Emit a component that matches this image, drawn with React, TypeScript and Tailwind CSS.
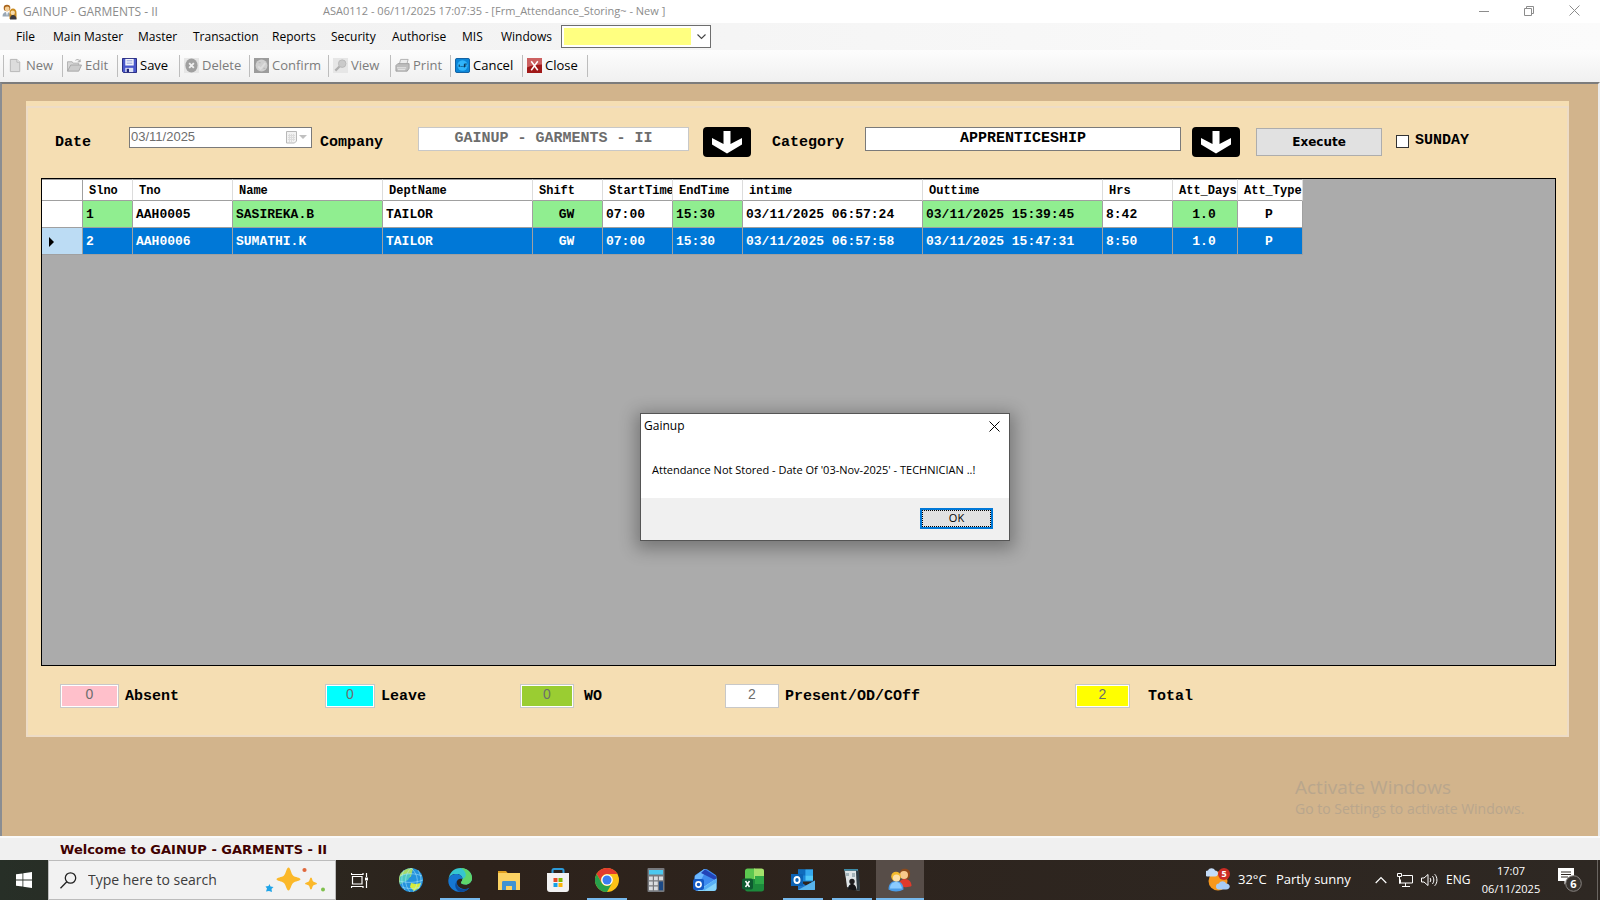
import type { ReactNode } from "react";

const ui = "font-['Open_Sans',sans-serif]";
const mono = "font-['Liberation_Mono',monospace]";

const menuItems = [
  { label: "File", width: "w-[37px]" },
  { label: "Main Master", width: "w-[85px]" },
  { label: "Master", width: "w-[55px]" },
  { label: "Transaction", width: "w-[79px]" },
  { label: "Reports", width: "w-[59px]" },
  { label: "Security", width: "w-[61px]" },
  { label: "Authorise", width: "w-[70px]" },
  { label: "MIS", width: "w-[39px]" },
  { label: "Windows", width: "w-[60px]" },
];

function PeopleIcon({ className }: { className: string }) {
  return (
    <svg viewBox="0 0 24 24" className={className} aria-hidden="true">
      <path d="M11 18c0-5 2-7 6-7s6.500 3 6.500 7c-2 1.500-9 1.500-12.500 0z" fill="#e03a2c" />
      <path d="M11.500 5.500C12 1.500 15 .5 17.500 .8c3.500.4 5 3 4.500 6.200-.3 2-1 3-2 4l-6-1z" fill="#8c4a1c" />
      <circle cx="16" cy="7" r="4" fill="#f8c88c" />
      <path d="M.5 21.500c0-5.500 3-8.500 7.500-8.500s7.500 3 7.500 8.500c-4 2.500-11 2.500-15 0z" fill="#4a9ce8" />
      <path d="M2 20.500c0-4.500 3-6.500 6-6.500s5 2 6 6.500z" fill="#8acbff" />
      <circle cx="8" cy="8.500" r="4.800" fill="#f2b92c" />
      <circle cx="8.500" cy="10" r="3.600" fill="#fde0a8" />
    </svg>
  );
}

function TitlePeopleIcon() {
  return (
    <svg viewBox="0 0 16 16" className="size-4" aria-hidden="true">
      <path d="M0.500 12.500c0-3 1.500-4.500 4-4.500s4 1.500 4 4.500z" fill="#9aa8b6" />
      <path d="M4 8l1 4 1-4z" fill="#fff" />
      <circle cx="5" cy="4" r="3.300" fill="#a8641c" />
      <circle cx="5.200" cy="5" r="2.400" fill="#f5cf96" />
      <path d="M7.500 15V9c0-3 1.500-4.500 3.500-4.500S14.500 6 14.500 9v6z" fill="#c98a1e" />
      <path d="M8 15.500c0-3 1-4.500 3-4.500s3.500 1.500 3.500 4.500z" fill="#3a3a42" />
      <circle cx="10.700" cy="8.800" r="2.200" fill="#f7dcae" />
    </svg>
  );
}

const toolbarItems: { label: string; width: string; enabled: boolean; icon: ReactNode }[] = [
  {
    label: "New",
    width: "w-[59px]",
    enabled: false,
    icon: (
      <>
        <path d="M2.500 1.500h7l3 3v10h-10z" fill="#dcdcdc" stroke="#b4b4b4" />
        <path d="M9.500 1.500v3h3" fill="#f4f4f4" stroke="#b4b4b4" />
      </>
    ),
  },
  {
    label: "Edit",
    width: "w-[55px]",
    enabled: false,
    icon: (
      <>
        <path d="M0.500 14V4h5l1 1.500h6V8" fill="#d6d6d6" stroke="#b0b0b0" />
        <path d="M0.500 14L4 7.500h11.500L12.500 14z" fill="#cccccc" stroke="#a8a8a8" />
        <path d="M9 2.500c2-1.500 4-1 5 1.500m0-2.500V4h-2.500" fill="none" stroke="#a8a8a8" />
      </>
    ),
  },
  {
    label: "Save",
    width: "w-[62px]",
    enabled: true,
    icon: (
      <>
        <path d="M.5.5h15v15h-14l-1-1z" fill="#4a58cc" stroke="#20247c" />
        <path d="M3.500 1h9v7h-9z" fill="#f2f4fb" />
        <path d="M5 3h6M5 5.500h6" stroke="#8c9ada" />
        <path d="M3.500 10.500H12V15H3.500z" fill="#dde2f4" />
        <path d="M5 11.500h2.500V15H5z" fill="#20247c" />
      </>
    ),
  },
  {
    label: "Delete",
    width: "w-[70px]",
    enabled: false,
    icon: (
      <>
        <path d="M0 0h16v16H0z" fill="#e6e6e6" />
        <ellipse cx="8" cy="8" rx="6.500" ry="7.500" fill="#a0a0a0" />
        <path d="M5.500 5.500l5 5m0-5l-5 5" stroke="#f0f0f0" strokeWidth="2" />
      </>
    ),
  },
  {
    label: "Confirm",
    width: "w-[79px]",
    enabled: false,
    icon: (
      <>
        <path d="M0 0h16v16H0z" fill="#9c9c9c" />
        <circle cx="8" cy="8" r="6.300" fill="#cfcfcf" />
        <path d="M4.500 9l2.500 2.500 5-6" fill="none" stroke="#dedede" strokeWidth="2" />
        <path d="M5 5h2m3 6h2" stroke="#b4b4b4" />
      </>
    ),
  },
  {
    label: "View",
    width: "w-[62px]",
    enabled: false,
    icon: (
      <>
        <path d="M0 0h16v16H0z" fill="#e6e6e6" />
        <path d="M7.500 8.500L2.500 13.500" stroke="#b0b0b0" strokeWidth="2.400" />
        <circle cx="9.800" cy="6" r="4" fill="#cacaca" stroke="#b8b8b8" />
      </>
    ),
  },
  {
    label: "Print",
    width: "w-[60px]",
    enabled: false,
    icon: (
      <>
        <path d="M4.500 7l1.500-5.500h8L12.500 7z" fill="#ececec" stroke="#b0b0b0" />
        <path d="M1 8l2-2h12v5l-2 3H1z" fill="#bdbdbd" stroke="#a0a0a0" />
        <path d="M2 10.500h10M3 12.500h8" stroke="#efefef" />
      </>
    ),
  },
  {
    label: "Cancel",
    width: "w-[72px]",
    enabled: true,
    icon: (
      <>
        <rect x="0.500" y="0.500" width="15" height="15" rx="1.500" fill="#0c86d8" stroke="#0a5a9c" />
        <circle cx="8" cy="8" r="5.500" fill="#30b4fa" />
        <path d="M4.500 7v2.500m2-1v1m2-1v1m1.500.5V6.500h2.500m-2.500 2h2" stroke="#062a4c" fill="none" />
      </>
    ),
  },
  {
    label: "Close",
    width: "w-[65px]",
    enabled: true,
    icon: (
      <>
        <path d="M0 0h16v16H0z" fill="#a01818" />
        <path d="M0 0h16v7c-5 0-11 1-16 3z" fill="#cc6060" />
        <path d="M4.500 3.500l7 9.500m0-9.500l-7 9.500" stroke="#fff" strokeWidth="1.600" />
      </>
    ),
  },
];

const columns = [
  { name: "Slno", width: "w-[50px]", green: true, center: false },
  { name: "Tno", width: "w-[100px]", green: false, center: false },
  { name: "Name", width: "w-[150px]", green: true, center: false },
  { name: "DeptName", width: "w-[150px]", green: false, center: false },
  { name: "Shift", width: "w-[70px]", green: true, center: true },
  { name: "StartTime", width: "w-[70px]", green: false, center: false },
  { name: "EndTime", width: "w-[70px]", green: true, center: false },
  { name: "intime", width: "w-[180px]", green: false, center: false },
  { name: "Outtime", width: "w-[180px]", green: true, center: false },
  { name: "Hrs", width: "w-[70px]", green: false, center: false },
  { name: "Att_Days", width: "w-[65px]", green: true, center: true },
  { name: "Att_Type", width: "w-[65px]", green: false, center: true },
];

const rows = [
  ["1", "AAH0005", "SASIREKA.B", "TAILOR", "GW", "07:00", "15:30", "03/11/2025 06:57:24", "03/11/2025 15:39:45", "8:42", "1.0", "P"],
  ["2", "AAH0006", "SUMATHI.K", "TAILOR", "GW", "07:00", "15:30", "03/11/2025 06:57:58", "03/11/2025 15:47:31", "8:50", "1.0", "P"],
];

const counters = [
  { id: "absent", label: "Absent", value: "0", slot: "w-[265px]", box: "w-[59px]", fill: "bg-[#ffc0cb]", gap: "gap-1.5" },
  { id: "leave", label: "Leave", value: "0", slot: "w-[195px]", box: "w-[50px]", fill: "bg-[#00ffff]", gap: "gap-1.5" },
  { id: "wo", label: "WO", value: "0", slot: "w-[205px]", box: "w-[54px]", fill: "bg-[#9acd32]", gap: "gap-2.5" },
  { id: "present", label: "Present/OD/COff", value: "2", slot: "w-[350px]", box: "w-[54px]", fill: "bg-white", gap: "gap-1.5" },
  { id: "total", label: "Total", value: "2", slot: "w-[160px]", box: "w-[55px]", fill: "bg-[#ffff00]", gap: "gap-[18px]" },
];

function ArrowButton({ label }: { label: string }) {
  return (
    <button type="button" aria-label={label} className="flex h-[30px] w-12 items-center justify-center rounded bg-black">
      <svg viewBox="0 0 32 24" className="h-6 w-8" aria-hidden="true">
        <path d="M12.500 1h7v13l11.500-6v6.500L16 23.500 1 14.500V8l11.500 6z" fill="#fff" />
      </svg>
    </button>
  );
}

const apps: { name: string; running: boolean; icon: ReactNode }[] = [
  {
    name: "Browser",
    running: false,
    icon: (
      <>
        <circle cx="12" cy="12" r="12" fill="#2492dc" />
        <path d="M2 5c4-4 8-5.500 12-4.500l-2 8-5 3-6 5C-.5 13-.3 8 2 5z" fill="#a6dc6c" />
        <path d="M1 9c4-4 8-4 11-3l-3 6-8 4z" fill="#4cc8c0" />
        <path d="M12 15l5 1 5-1-2 5-5 3-4-4z" fill="#d8ec3c" />
        <path d="M1 8c7-3 15-3 22 0M0 13c8 2 16 2 24-1M3 19c6 2 12 2 18 0M12 0C5 7 5 17 11 24M12 0c8 7 8 16 2 24M5 2c-3 6-3 14 1 20M19 2c4 7 4 14 0 19" fill="none" stroke="#b4ecff" strokeWidth=".5" />
      </>
    ),
  },
  {
    name: "Microsoft Edge",
    running: true,
    icon: (
      <>
        <path d="M0.500 11C1.500 4.500 6 0 12.500 0 19 0 24 4.500 24 10c0 4-3 6.500-6.500 6.500-3 0-4.500-1-4.500-2 0-.8 1.500-1.500 1.500-3.500 0-3-3-5-6-5C4 6 1.500 8 .5 11z" fill="#36c6d0" />
        <path d="M13 0c6.500.2 11 4.700 11 10 0 4-3 6.500-6.500 6.500-3 0-4.500-1-4.500-2 0-.8 1.500-1.500 1.500-3.500C20 9 18 3 13 0z" fill="#5fd66b" />
        <path d="M.3 13C.3 8.500 4 6 8.500 6c3.500 0 6 2.200 6 5-4-1-6.500 1.500-5.500 5 1 3.500 4.500 5 8 5 2 0 3-.5 4.500-1.300C19.500 22.500 16 24 12.500 24 5.500 24 .3 19 .3 13z" fill="#1677d2" />
        <path d="M9.500 12c-2 4 0 8 4.500 9 3 .6 5.500-.3 7.500-1.300-2 2.800-5.500 4.300-9 4.300-4.500-1-7.500-7-3-12z" fill="#0b4a9a" />
      </>
    ),
  },
  {
    name: "File Explorer",
    running: false,
    icon: (
      <>
        <path d="M1 3h8l2 2.500H1z" fill="#e0a020" />
        <path d="M1 5h22v17H1z" fill="#fbd263" />
        <path d="M5 22v-7.500c0-1 .5-1.500 1.500-1.500h11c1 0 1.500.5 1.500 1.500V22h-4v-4H9v4z" fill="#3f92d2" />
      </>
    ),
  },
  {
    name: "Microsoft Store",
    running: false,
    icon: (
      <>
        <path d="M6.500 6V2.500c0-1 .5-1.500 1.500-1.500h8c1 0 1.500.5 1.500 1.500V6" fill="none" stroke="#2c9ad8" strokeWidth="2" />
        <path d="M1 5h22v16c0 2-1 3-3 3H4c-2 0-3-1-3-3z" fill="#f2f2f2" />
        <path d="M7.500 10h4v4h-4z" fill="#e64a26" />
        <path d="M12.500 10h4v4h-4z" fill="#7fb900" />
        <path d="M7.500 15h4v4h-4z" fill="#14a0e6" />
        <path d="M12.500 15h4v4h-4z" fill="#fbb40a" />
      </>
    ),
  },
  {
    name: "Google Chrome",
    running: true,
    icon: (
      <>
        <circle cx="12" cy="12" r="12" fill="#fbc116" />
        <path d="M1.600 6A12 12 0 0 1 22.400 6H12a6 6 0 0 0-5.200 9z" fill="#e33b2e" />
        <path d="M1.600 6A12 12 0 0 0 12 24l5.200-9a6 6 0 0 1-10.400 0z" fill="#27a04b" />
        <circle cx="12" cy="12" r="5.800" fill="#fff" />
        <circle cx="12" cy="12" r="4.500" fill="#3b7df0" />
      </>
    ),
  },
  {
    name: "Calculator",
    running: false,
    icon: (
      <>
        <rect x="3.500" y="0" width="17" height="24" rx="1" fill="#77797d" />
        <path d="M5 2h14v4.500H5z" fill="#4cc8ee" />
        <path d="M5 8.500h3.800v3.800H5zM10 8.500h3.800v3.800H10zM15 8.500h4v3.800h-4zM5 13.500h3.800v3.800H5zM10 13.500h3.800v3.800H10zM5 18.500h3.800v3.800H5zM10 18.500h3.800v3.800H10z" fill="#dadde0" />
        <path d="M15 13.500h4v8.800h-4z" fill="#1c4a86" />
      </>
    ),
  },
  {
    name: "Outlook",
    running: false,
    icon: (
      <>
        <path d="M1.500 9c0-1.200.5-2 1.500-2.600L10.500 1.600c1.200-.8 2.800-.8 4 0L22 6.400c1 .6 1.500 1.400 1.500 2.600v11c0 2-1 3-3 3H4.500c-2 0-3-1-3-3z" fill="#3f8cf0" />
        <path d="M2 8l8.500-6.400c1-.7 2-.6 3 0L8 12l-6.500 2z" fill="#6cb8ff" />
        <path d="M8 5l4-3.800 11 7.300v4z" fill="#2344b8" />
        <path d="M5 22.500l18.500-12V20c0 2-1 3-3 3H5z" fill="#86d4fa" />
        <path d="M10 20l13.500-9.500v4L11 22.500z" fill="#58b0f6" />
        <rect x="0" y="11" width="11" height="11" rx="2" fill="#1459c4" />
        <circle cx="5.500" cy="16.500" r="2.600" fill="none" stroke="#fff" strokeWidth="1.600" />
      </>
    ),
  },
  {
    name: "Excel",
    running: false,
    icon: (
      <>
        <path d="M3 3c0-1.500 1-2.500 2.500-2.500H13V12H3z" fill="#5cc850" />
        <path d="M12 .5h7.500C21 .5 22 1.500 22 3v8H12z" fill="#a4e26c" />
        <path d="M3 11h19v10c0 1.500-1 2.500-2.500 2.500h-14C4 23.500 3 22.500 3 21z" fill="#1c8a3c" />
        <path d="M13 8h9v8h-9z" fill="#2fa847" />
        <rect x="0" y="10.500" width="11" height="11" rx="2" fill="#0e5a30" />
        <path d="M3.500 13l4 6m0-6l-4 6" stroke="#fff" strokeWidth="1.500" />
      </>
    ),
  },
  {
    name: "Outlook Classic",
    running: true,
    icon: (
      <>
        <path d="M7 1.500h15v12H7z" fill="#1a86d8" />
        <path d="M7 1.500h7.500v6H7z" fill="#0f6cbd" />
        <path d="M14.500 1.500H22v6h-7.500z" fill="#34a8ee" />
        <path d="M14.500 7.500H22v5h-7.500z" fill="#50c8f8" />
        <path d="M7 12.500l8 5 9-5V22H7z" fill="#1c74c8" />
        <path d="M7 22l17-9.500V21c0 .6-.4 1-1 1z" fill="#58b4ec" />
        <path d="M0 6h12v12H0z" fill="#0c62b4" />
        <ellipse cx="6" cy="12" rx="2.600" ry="3" fill="none" stroke="#fff" strokeWidth="1.800" />
      </>
    ),
  },
  {
    name: "Visitor Log",
    running: true,
    icon: (
      <>
        <path d="M4 1h14l2 22-12-2z" fill="#6c7a80" />
        <path d="M5 3h11l1 14 1 4-11-2z" fill="#dfe4e6" />
        <path d="M16 2l3 2 1 19-3-1z" fill="#2c3a42" />
        <path d="M4 1h14v1.500H4z" fill="#3c8ca8" />
        <path d="M6 5h3v3H6zM12 5h3v4h-3z" fill="#a4b4ba" />
        <circle cx="12" cy="13.500" r="2.700" fill="#1c1c1e" />
        <path d="M8 21.500c0-4 2-5.500 4-5.500s4.500 1.500 4.500 6.500z" fill="#141416" />
      </>
    ),
  },
];

function Field({ id, value, className }: { id: string; value: string; className: string }) {
  return (
    <input
      id={id}
      type="text"
      readOnly
      defaultValue={value}
      className={`h-6 self-start border bg-white pb-0.5 text-center text-[15px] leading-none outline-none ${className}`}
    />
  );
}

function WindowHeader() {
  return (
    <header className="bg-white text-xs text-black">
      <div className="flex h-[23px] items-center pl-[2px] pr-5 text-[#8c8c8c]">
        <TitlePeopleIcon />
        <h1 className="ml-[5px] w-[300px] whitespace-pre">GAINUP - GARMENTS - II</h1>
        <p className="flex-1 whitespace-nowrap text-[11px]">ASA0112 - 06/11/2025 17:07:35 - [Frm_Attendance_Storing~ - New ]</p>
        <div className="-mt-[2px] flex gap-[35px]">
          <button type="button" aria-label="Minimize">
            <svg viewBox="0 0 10 10" className="size-2.5" aria-hidden="true"><path d="M0 5.500h10" stroke="#8c8c8c" /></svg>
          </button>
          <button type="button" aria-label="Restore">
            <svg viewBox="0 0 10 10" className="size-2.5" fill="none" stroke="#8c8c8c" aria-hidden="true">
              <path d="M.5 2.500h7v7h-7zM2.500 2.500v-2h7v7h-2" />
            </svg>
          </button>
          <button type="button" aria-label="Close window">
            <svg viewBox="0 0 11 11" className="size-[11px]" aria-hidden="true"><path d="M.5.5l10 10m0-10l-10 10" stroke="#8c8c8c" /></svg>
          </button>
        </div>
      </div>

      <nav className="flex h-[27px] items-center bg-linear-to-r from-[#f0f0f0] to-[#fbfbfb] pl-4" aria-label="Main menu">
        {menuItems.map((m) => (
          <button key={m.label} type="button" className={`${m.width} shrink-0 whitespace-nowrap text-left`}>
            {m.label}
          </button>
        ))}
        <div className="flex h-[23px] w-[150px] items-center border border-[#6e6e6e] bg-white p-0.5">
          <select aria-label="Quick search" className="h-full flex-1 appearance-none bg-[#ffff80] outline-none">
            <option></option>
          </select>
          <svg viewBox="0 0 9 6" className="ml-1.5 mr-0.5 h-1.5 w-[9px]" aria-hidden="true">
            <path d="M.5.5l4 4 4-4" fill="none" stroke="#444" strokeWidth="1.100" />
          </svg>
        </div>
      </nav>

      <div className="flex h-8 items-center bg-linear-to-b from-[#fdfdfd] to-[#f0f0f0] pl-[3px] text-[13px]" role="toolbar" aria-label="Actions">
        {toolbarItems.map((t) => (
          <div key={t.label} className={`${t.width} flex h-[22px] shrink-0 items-center border-l border-[#bdbdbd] pl-1`}>
            <button
              type="button"
              disabled={!t.enabled}
              className={`flex items-center gap-[3px] ${t.enabled ? "text-black" : "text-[#7c7c7c]"}`}
            >
              <svg viewBox="0 0 16 16" className="size-[15px] shrink-0" fill="none" aria-hidden="true">{t.icon}</svg>
              {t.label}
            </button>
          </div>
        ))}
        <div className="h-[22px] border-l border-[#bdbdbd]" />
      </div>
    </header>
  );
}

function AttendanceForm() {
  return (
    <form className={`mr-[29px] ml-6 mt-[17px] flex flex-1 flex-col bg-[#f5deb3] pt-[5px] text-black ${mono}`} onSubmit={(e) => e.preventDefault()}>
      <div className="flex flex-1 flex-col border-2 border-[#eddcc6] pb-[27px] pl-[13px] pr-[11px] pt-[19px]">
        <div className="flex h-[30px] items-center pl-3.5 text-[15px] font-bold">
          <label htmlFor="date" className="w-[74px] pt-0.5">Date</label>
          <div className="flex h-[21px] w-[183px] items-center self-start border border-[#7a7a7a] bg-white pr-1">
            <input id="date" type="text" readOnly defaultValue="03/11/2025" className="min-w-0 flex-1 pb-0.5 pl-px font-['Liberation_Sans',sans-serif] text-[13px] font-normal text-[#6d6d6d] outline-none" />
            <svg viewBox="0 0 21 13" className="h-[13px] w-[21px]" aria-hidden="true">
              <path d="M.5.5h10v9.500l-2 2h-8z" fill="#f2f2f2" stroke="#b8b8b8" />
              <path d="M2 4.500h7m-7 2h7m-7 2h7M3.500 3v8m2-8v8m2-8v7" stroke="#dcdcdc" />
              <path d="M13 4h8l-4 4z" fill="#c0c0c0" />
            </svg>
          </div>
          <label htmlFor="company" className="ml-2 w-[98px] pt-0.5">Company</label>
          <Field id="company" value="GAINUP - GARMENTS - II" className="w-[271px] border-[#c8c8c8] text-[#6d6d6d]" />
          <div className="ml-3.5"><ArrowButton label="Choose company" /></div>
          <label htmlFor="category" className="ml-[21px] w-[93px] pt-0.5">Category</label>
          <Field id="category" value="APPRENTICESHIP" className="w-[316px] border-[#7a7a7a] text-black" />
          <div className="ml-[11px]"><ArrowButton label="Choose category" /></div>
          <button type="button" className="ml-4 h-7 w-[126px] border border-[#adadad] bg-[#e1e1e1] font-['DejaVu_Sans',sans-serif] text-xs font-bold">
            Execute
          </button>
          <label className="ml-3.5 flex items-center gap-1.5 pb-px">
            <input type="checkbox" className="size-[13px] appearance-none border border-[#333] bg-white" />
            SUNDAY
          </label>
        </div>

        <div className="mt-[21px] flex-1 overflow-hidden border border-black bg-[#ababab]">
          <table className="w-[1261px] table-fixed border-separate border-spacing-0 whitespace-nowrap text-left">
            <thead className="text-xs font-bold">
              <tr className="h-[22px]">
                <th className="w-[41px] border-b border-r border-t border-[#a0a0a0] bg-white" aria-label="Row marker" />
                {columns.map((c) => (
                  <th key={c.name} scope="col" className={`${c.width} overflow-hidden border-b border-r border-t border-b-[#a0a0a0] border-r-[#dcdcdc] border-t-[#a0a0a0] bg-white pb-0 pl-1.5 pt-0.5 leading-4`}>
                    {c.name}
                  </th>
                ))}
              </tr>
            </thead>
            <tbody className="text-[13px] font-bold">
              {rows.map((row, r) => {
                const selected = r === 1;
                return (
                  <tr key={row[1]} className="h-[27px]" aria-selected={selected}>
                    <td className={`border-b border-r border-[#a0a0a0] pb-0 pt-0.5 ${selected ? "bg-[#bcdcf4]" : "bg-white"}`}>
                      {selected && (
                        <svg viewBox="0 0 5 10" className="ml-[7px] h-2.5 w-[5px]" aria-hidden="true"><path d="M0 0l5 5-5 5z" /></svg>
                      )}
                    </td>
                    {columns.map((c, i) => (
                      <td
                        key={c.name}
                        className={`overflow-hidden border-b border-r border-[#a0a0a0] pb-0 pt-0.5 ${c.center ? "pr-0.5 text-center" : "pl-[3px]"} ${
                          selected ? "bg-[#0078d7] text-white" : c.green ? "bg-[#90ee90]" : "bg-white"
                        }`}
                      >
                        {row[i]}
                      </td>
                    ))}
                  </tr>
                );
              })}
            </tbody>
          </table>
        </div>

        <div className="mt-[18px] flex h-6 items-center pl-[19px] text-[15px] font-bold">
          {counters.map((c) => (
            <div key={c.id} className={`flex shrink-0 items-center ${c.slot} ${c.gap}`}>
              <div className={`${c.box} h-6 border border-[#c8c8c8] bg-white p-px`}>
                <input
                  id={c.id}
                  type="text"
                  readOnly
                  defaultValue={c.value}
                  className={`block h-5 w-full pb-1 text-center font-['Liberation_Sans',sans-serif] text-sm font-normal leading-none text-[#6d6d6d] outline-none ${c.fill}`}
                />
              </div>
              <label htmlFor={c.id} className="pt-0.5">{c.label}</label>
            </div>
          ))}
        </div>
      </div>
    </form>
  );
}

function MessageDialog() {
  return (
    <div role="dialog" aria-labelledby="dialog-title" className="absolute left-[640px] top-[413px] flex h-[128px] w-[370px] flex-col border border-[#555] bg-white text-black shadow-[0_4px_16px_4px_rgba(0,0,0,0.3)]">
      <div className="flex h-6 items-center justify-between pl-[3px] pr-[9px]">
        <h2 id="dialog-title" className="text-xs">Gainup</h2>
        <button type="button" aria-label="Close dialog">
          <svg viewBox="0 0 11 11" className="size-[11px]" aria-hidden="true"><path d="M.5.5l10 10m0-10l-10 10" stroke="#000" /></svg>
        </button>
      </div>
      <p className="flex flex-1 items-center whitespace-nowrap pl-[11px] pt-1 text-[11px]">
        Attendance Not Stored - Date Of '03-Nov-2025' - TECHNICIAN ..!
      </p>
      <div className="flex h-[42px] items-center justify-end bg-[#f0f0f0] pb-0.5 pr-4 text-[11px]">
        <button type="button" className="flex h-[21px] w-[73px] border-2 border-[#0078d7] bg-[#e1e1e1]">
          <span className="flex h-full w-full items-center justify-center border border-dotted border-black">OK</span>
        </button>
      </div>
    </div>
  );
}

function Taskbar() {
  return (
    <footer className="flex h-10 shrink-0 items-stretch bg-linear-to-r from-[#272f27] via-[#2d221b] via-30% to-[#2e2823] text-white">
      <button type="button" aria-label="Start" className="flex w-12 items-center justify-center">
        <svg viewBox="0 0 16 16" className="size-4" aria-hidden="true">
          <path d="M0 2.300l6.500-.9v6.200H0zM7.300 1.300L16 0v7.600H7.300zM0 8.400h6.500v6.200L0 13.700zM7.300 8.400H16V16l-8.700-1.200z" fill="#fff" />
        </svg>
      </button>
      <div className="flex w-[288px] items-center border border-[#bcbcbc] bg-[#f2f2f2] pl-[11px]">
        <svg viewBox="0 0 17 17" className="size-[17px]" fill="none" stroke="#222" strokeWidth="1.300" aria-hidden="true">
          <circle cx="10.500" cy="6" r="5.200" />
          <path d="M6.800 9.800L.5 16.300" />
        </svg>
        <input type="text" aria-label="Search" placeholder="Type here to search" className="ml-[11px] min-w-0 flex-1 text-sm outline-none placeholder:text-[#3c3c3c]" />
        <svg viewBox="0 0 60 26" className="mr-2.5 h-[26px] w-[60px] shrink-0" aria-hidden="true">
          <path d="M23.500 .5c2 0 2.500 6 4.500 8s7.500 2 7.500 3.800-5.500 1.800-7.500 3.800-2.500 7.400-4.500 7.400-2.500-5.400-4.500-7.400-7.500-2-7.500-3.800 5.500-1.800 7.500-3.800 2.500-8 4.500-8z" fill="#fbb829" />
          <path d="M46 10.500c1.200 0 1.200 3 2.200 4s3.800 1 3.800 2.100-2.800 1-3.800 2-1 3.900-2.200 3.900-1.200-2.900-2.200-3.900-3.800-.9-3.800-2 2.800-1.100 3.800-2.100 1-4 2.200-4z" fill="#fbb829" />
          <path d="M4.500 17l1 2.500 3 .5-2 2 .5 3-3-1-3 .5 1-3-1.500-2 3-.5z" fill="#1fa4e8" />
          <circle cx="39.500" cy="3" r="2.100" fill="#e0683c" />
          <circle cx="58" cy="22.500" r="2" fill="#7fc04c" />
        </svg>
      </div>
      <button type="button" aria-label="Task view" className="flex w-[50px] items-center justify-center pr-[3px]">
        <svg viewBox="0 0 17 17" className="size-[17px]" fill="none" stroke="#fff" aria-hidden="true">
          <path d="M1.500 4.500h9.500v7.500H1.500zM.5 1v1.500h11.500V1M.5 16v-1.500h11.500V16M15.500 1v4m0 4v7" strokeWidth="1.200" />
          <path d="M14 5.500h3v3h-3z" fill="#fff" stroke="none" />
        </svg>
      </button>
      {apps.map((a) => (
        <button key={a.name} type="button" aria-label={a.name} className="flex w-[49px] flex-col items-center">
          <span className="flex flex-1 items-center pt-0.5">
            <svg viewBox="0 0 24 24" className="size-6" fill="none" aria-hidden="true">{a.icon}</svg>
          </span>
          <span className={`h-0.5 w-10 ${a.running ? "bg-[#76b9ed]" : ""}`} />
        </button>
      ))}
      <button type="button" aria-label="Gainup" className="flex w-12 flex-col items-center bg-[#574d48]">
        <span className="flex flex-1 items-center pt-0.5"><PeopleIcon className="size-6" /></span>
        <span className="h-0.5 w-full bg-[#76b9ed]" />
      </button>

      <div className="ml-auto flex items-center">
        <button type="button" className="flex items-center whitespace-nowrap text-[13px]">
          <svg viewBox="0 0 25 24" className="mr-[7px] h-6 w-[25px]" aria-hidden="true">
            <circle cx="12" cy="13" r="9.500" fill="#f8981c" />
            <path d="M2 8.500a3 3 0 0 1 0-6c1-3 6-3 7 0 4 0 4 6 0 6z" fill="#c4dcf8" />
            <path d="M13 21.500a3 3 0 0 1 0-6c1-3 6-3 7 0 5 0 5 6 0 6z" fill="#a8ccf4" />
            <circle cx="18" cy="6" r="6" fill="#cc2c24" />
            <text x="18" y="9" fontSize="9" fontWeight="bold" textAnchor="middle" fill="#fff">5</text>
          </svg>
          <span className="w-[38px] text-left">32°C</span>
          <span className="w-[99px] text-left">Partly sunny</span>
        </button>
        <button type="button" aria-label="Show hidden icons" className="w-[22px]">
          <svg viewBox="0 0 12 8" className="h-2 w-3" aria-hidden="true"><path d="M.7 7L6 1.500 11.300 7" fill="none" stroke="#fff" strokeWidth="1.200" /></svg>
        </button>
        <button type="button" aria-label="Network" className="w-6">
          <svg viewBox="0 0 16 14" className="h-3.5 w-4" fill="none" stroke="#fff" aria-hidden="true">
            <path d="M5.500 2.500h10v7.500h-12V6.500M8.500 10v3M5 13.500h8M.5.500h4v3h-4zM2.500 3.500v7h1" />
          </svg>
        </button>
        <button type="button" aria-label="Volume" className="w-[25px]">
          <svg viewBox="0 0 17 14" className="h-3.5 w-[17px]" fill="none" stroke="#fff" aria-hidden="true">
            <path d="M.5 5h2.500l4-3.500v11L3 9H.5zM9 5c1 1 1 3 0 4M11.300 3c2 2 2 6 0 8M13.700 1.200c3 3 3 8.600 0 11.600" />
          </svg>
        </button>
        <button type="button" className="w-[35px] text-left text-xs">ENG</button>
        <button type="button" className="flex w-[60px] flex-col items-center text-[11px] leading-[18px]">
          <span>17:07</span>
          <span>06/11/2025</span>
        </button>
        <button type="button" aria-label="6 notifications" className="ml-[17px] mr-[15px] h-6 w-6">
          <svg viewBox="0 0 24 24" className="size-6" aria-hidden="true">
            <path d="M0 0h16v13H10l-3.500 3.500V13H0z" fill="#fff" />
            <path d="M3 4h10M3 6.500h10M3 9h7" stroke="#2e2823" />
            <circle cx="15.500" cy="15.500" r="7.800" fill="#38332f" stroke="#8a8683" />
            <text x="15.500" y="19.500" fontSize="11" fontWeight="bold" textAnchor="middle" fill="#fff">6</text>
          </svg>
        </button>
        <div className="h-10 w-[3px] border-l border-[#6a6561]" />
      </div>
    </footer>
  );
}

export default function App() {
  return (
    <div className={`relative flex min-h-screen flex-col overflow-hidden bg-[#f0f0f0] ${ui}`}>
      <WindowHeader />
      <main className="relative flex flex-1 flex-col border-2 border-b-0 border-l-[#8a8d92] border-r-[#ececec] border-t-[#7c7c7c] bg-[#d2b48c] pb-[99px]">
        <AttendanceForm />
        <div className="absolute bottom-[17px] left-[1293px] text-[#b9a68c]">
          <p className="text-[19px] leading-6">Activate Windows</p>
          <p className="text-sm leading-5">Go to Settings to activate Windows.</p>
        </div>
      </main>
      <div className="h-6 border-t-2 border-[#fafafa] pl-[60px] pt-px font-['DejaVu_Sans',sans-serif] text-[13px] font-bold leading-[21px] text-[#400000]">
        Welcome to GAINUP - GARMENTS - II
      </div>
      <Taskbar />
      <MessageDialog />
    </div>
  );
}
